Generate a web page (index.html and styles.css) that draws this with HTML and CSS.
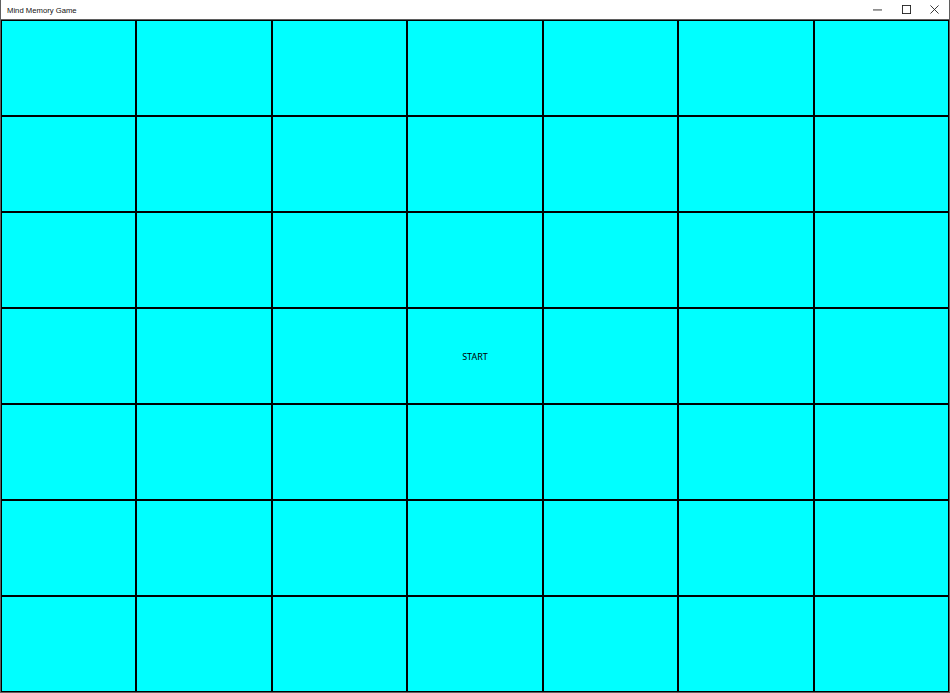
FILE: index.html
```html
<!DOCTYPE html>
<html>
<head>
<meta charset="utf-8">
<title>Mind Memory Game</title>
<link rel="stylesheet" href="styles.css">
</head>
<body>
<div class="window">
  <div class="titlebar">
    <span class="title">Mind Memory Game</span>
    <div class="controls">
      <span class="ctl"><svg width="10" height="10" viewBox="0 0 10 10"><path d="M0 5.5H10" stroke="#222" stroke-width="1"/></svg></span>
      <span class="ctl"><svg width="10" height="10" viewBox="0 0 10 10"><rect x="0.5" y="0.5" width="9" height="9" fill="none" stroke="#222" stroke-width="1"/></svg></span>
      <span class="ctl"><svg width="10" height="10" viewBox="0 0 10 10"><path d="M0.5 0.5L9.5 9.5M9.5 0.5L0.5 9.5" stroke="#222" stroke-width="1"/></svg></span>
    </div>
  </div>
  <div class="grid">
    <div class="cell"></div><div class="cell"></div><div class="cell"></div><div class="cell"></div><div class="cell"></div><div class="cell"></div><div class="cell"></div>
    <div class="cell"></div><div class="cell"></div><div class="cell"></div><div class="cell"></div><div class="cell"></div><div class="cell"></div><div class="cell"></div>
    <div class="cell"></div><div class="cell"></div><div class="cell"></div><div class="cell"></div><div class="cell"></div><div class="cell"></div><div class="cell"></div>
    <div class="cell"></div><div class="cell"></div><div class="cell"></div><div class="cell start">START</div><div class="cell"></div><div class="cell"></div><div class="cell"></div>
    <div class="cell"></div><div class="cell"></div><div class="cell"></div><div class="cell"></div><div class="cell"></div><div class="cell"></div><div class="cell"></div>
    <div class="cell"></div><div class="cell"></div><div class="cell"></div><div class="cell"></div><div class="cell"></div><div class="cell"></div><div class="cell"></div>
    <div class="cell"></div><div class="cell"></div><div class="cell"></div><div class="cell"></div><div class="cell"></div><div class="cell"></div><div class="cell"></div>
  </div>
</div>
</body>
</html>
```
FILE: styles.css
```css
html, body {
  margin: 0;
  padding: 0;
  background: #ffffff;
}
* { box-sizing: border-box; }
.window {
  width: 950px;
  height: 693px;
  display: flex;
  flex-direction: column;
  border-left: 1px solid #5f5f5f;
  border-right: 1px solid #5f5f5f;
  border-bottom: 1px solid #5f5f5f;
  font-family: "Noto Sans", "Open Sans", sans-serif;
}
.titlebar {
  height: 20px;
  flex: 0 0 20px;
  background: #ffffff;
  border-bottom: 1px solid #5f5f5f;
  display: flex;
  align-items: center;
  justify-content: space-between;
  padding-left: 6px;
}
.title {
  font-family: "Liberation Sans", Arial, sans-serif;
  font-size: 7.7px;
  color: #111;
  line-height: 19px;
  padding-top: 1px;
}
.controls {
  display: flex;
  height: 19px;
  margin-right: 0;
}
.ctl {
  width: 28.5px;
  height: 19px;
  display: flex;
  align-items: center;
  justify-content: center;
}
.ctl svg { width: 9px; height: 9px; }
.grid {
  flex: 1 1 auto;
  display: grid;
  grid-template-columns: repeat(7, 1fr);
  grid-template-rows: repeat(7, 1fr);
  background: #00ffff;
}
.cell {
  background: #00ffff;
  border: 1px solid #000;
  display: flex;
  align-items: center;
  justify-content: center;
}
.start {
  font-size: 9px;
  color: #000;
}
```
